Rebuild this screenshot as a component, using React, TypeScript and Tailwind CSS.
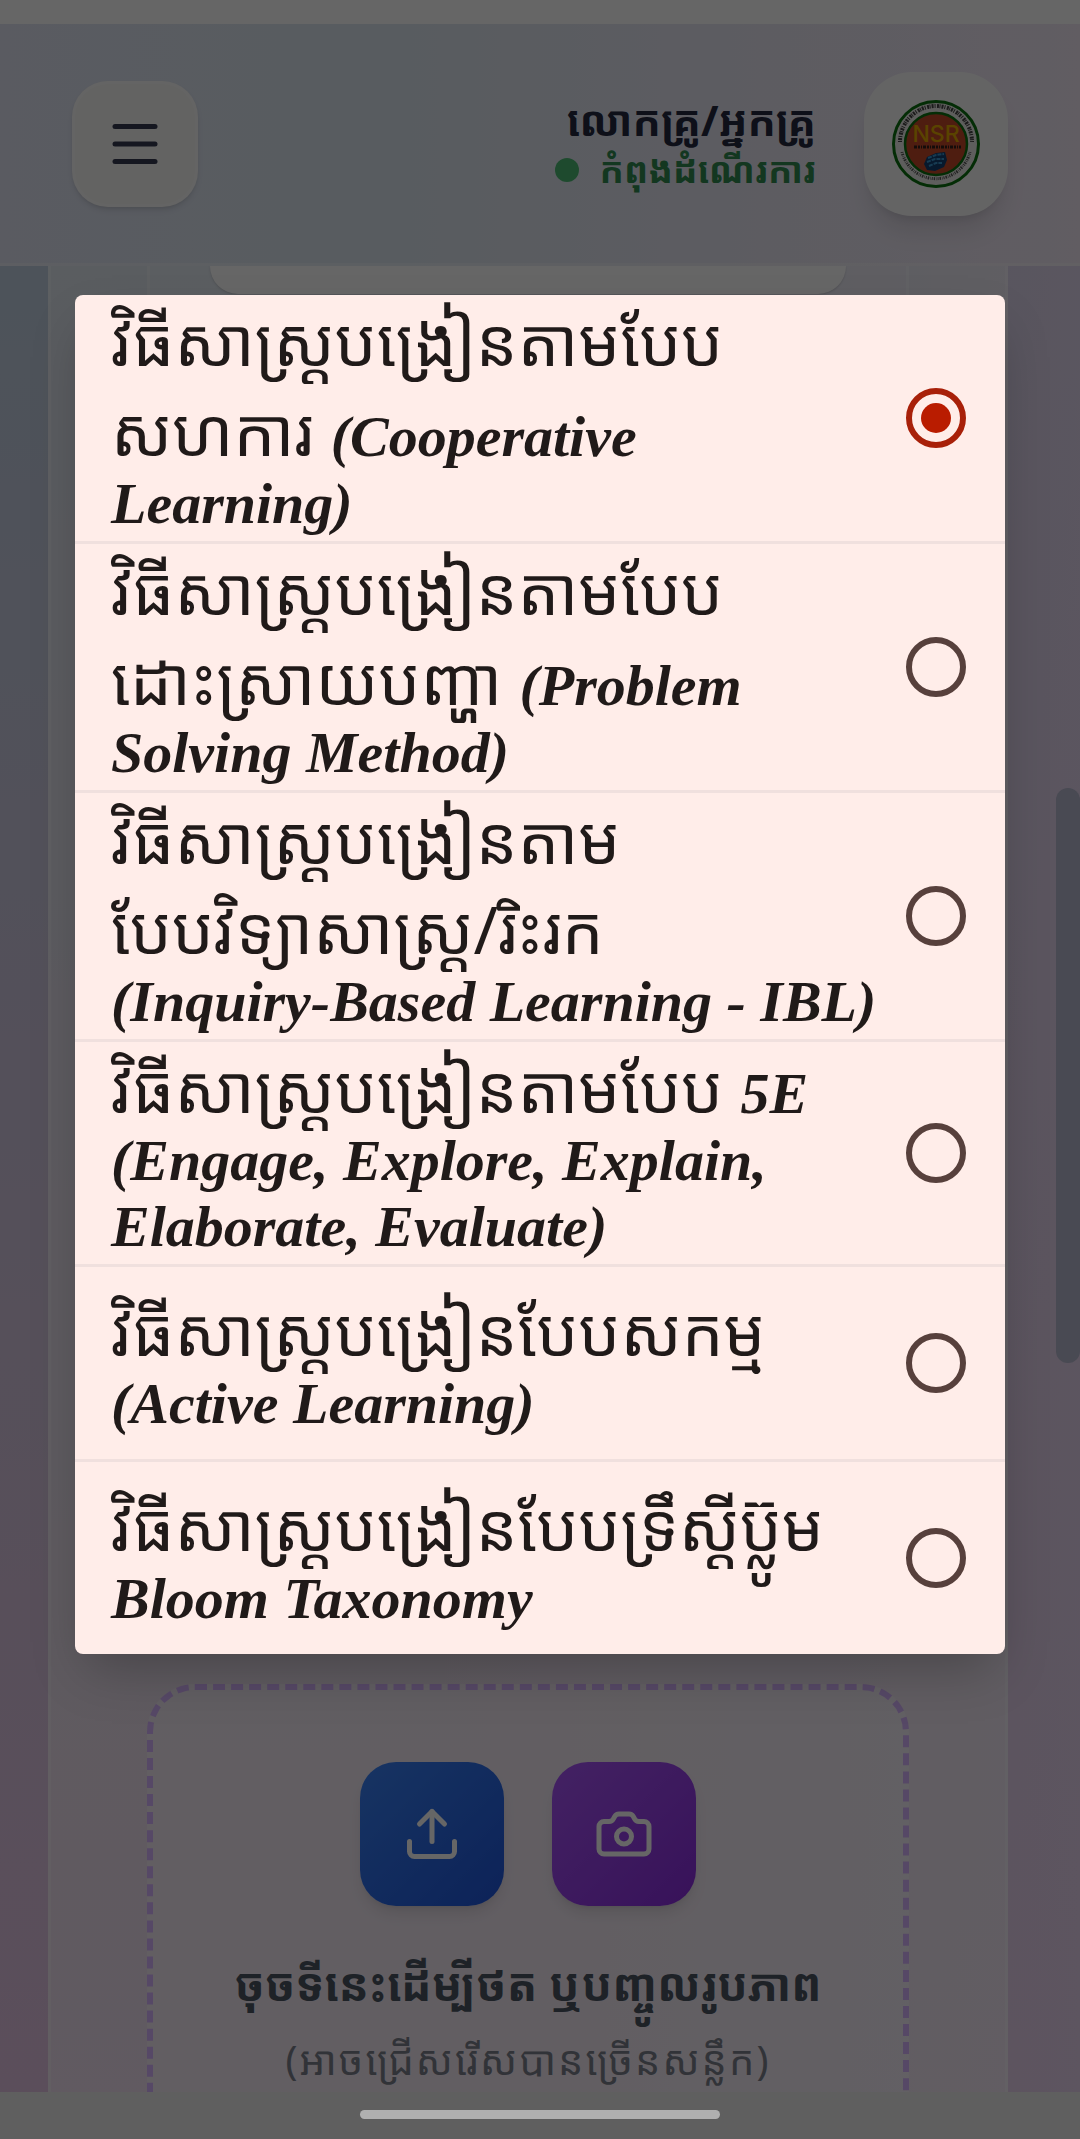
import React from "react";
import clsx from "clsx";
import { Camera, Menu, Upload } from "lucide-react";

type Part = { text: string; khmer?: boolean };
type Method = { id: string; lines: Part[][] };

const base = "វិធីសាស្ត្របង្រៀន";

const methods: Method[] = [
  {
    id: "cooperative",
    lines: [
      [{ text: base + "តាមបែប", khmer: true }],
      [{ text: "សហការ ", khmer: true }, { text: "(Cooperative" }],
      [{ text: "Learning)" }],
    ],
  },
  {
    id: "problem",
    lines: [
      [{ text: base + "តាមបែប", khmer: true }],
      [{ text: "ដោះស្រាយបញ្ហា ", khmer: true }, { text: "(Problem" }],
      [{ text: "Solving Method)" }],
    ],
  },
  {
    id: "inquiry",
    lines: [
      [{ text: base + "តាម", khmer: true }],
      [{ text: "បែបវិទ្យាសាស្ត្រ/រិះរក", khmer: true }],
      [{ text: "(Inquiry-Based Learning - IBL)" }],
    ],
  },
  {
    id: "five-e",
    lines: [
      [{ text: base + "តាមបែប ", khmer: true }, { text: "5E" }],
      [{ text: "(Engage, Explore, Explain," }],
      [{ text: "Elaborate, Evaluate)" }],
    ],
  },
  {
    id: "active",
    lines: [
      [{ text: base + "បែបសកម្ម", khmer: true }],
      [{ text: "(Active Learning)" }],
    ],
  },
  {
    id: "bloom",
    lines: [
      [{ text: base + "បែបទ្រឹស្តីប៊្លូម", khmer: true }],
      [{ text: "Bloom Taxonomy" }],
    ],
  },
];

const Emblem = () => (
  <svg viewBox="0 0 88 88" className="size-[88px]" role="img" aria-label="NSR">
    <circle cx="44" cy="44" r="42.5" fill="#ecece8" stroke="#0b700f" strokeWidth="3" />
    {/* lettering ring */}
    <path
      d="M8 42A36 36 0 0 1 80 42"
      fill="none"
      stroke="#444"
      strokeWidth="4"
      strokeDasharray="1 1 2 1 1 1.5 2 .5"
    />
    <path
      d="M10 52A35 35 0 0 0 78 52"
      fill="none"
      stroke="#555"
      strokeWidth="3"
      strokeDasharray="1 1 1.5 1 .5 1"
    />
    <circle cx="44" cy="44" r="31" fill="#c24a2a" stroke="#0b700f" strokeWidth="2.5" />
    <text
      x="44"
      y="42"
      textAnchor="middle"
      fontSize="23"
      fill="#e0a800"
      className="font-['Inter',sans-serif] font-medium"
    >
      NSR
    </text>
    <path d="M22 47h47" stroke="#33201a" strokeWidth="3" strokeDasharray="3 1 2 1 1 1" />
    <path d="M35 57l9-4 9-1 2 8-3 7-9 4-8-1-3-6z" fill="#123f70" />
    <path
      d="M36 58l8-3 8-1M35 62l8-3 9 0M37 66l7-3 6 0"
      stroke="#3a94cc"
      strokeWidth="2"
      strokeDasharray="4 1"
      fill="none"
    />
  </svg>
);

const Header: React.FC = () => (
  <header className="flex h-[242px] shrink-0 items-center justify-between border-b-[3px] border-white/30 bg-linear-to-r from-[#e0e4f3] via-[#dce6f0] via-35% to-[#f2e8f5] px-[72px]">
    <button
      aria-label="Menu"
      className="flex size-[126px] items-center justify-center rounded-[36px] border-[3px] border-white/40 bg-[#f8f8f6] text-[#363a50] shadow-md"
    >
      <Menu size={60} />
    </button>
    <div className="flex items-center gap-12">
      <div className="flex flex-col items-end font-bold">
        <p className="text-[42px] leading-[52px] text-[#252840]">លោកគ្រូ/អ្នកគ្រូ</p>
        <p className="flex items-center gap-5 text-[36px] leading-[48px] text-[#308a50]">
          <span className="size-6 rounded-full bg-[#4cba74]" />
          កំពុងដំណើរការ
        </p>
      </div>
      <div className="flex size-36 items-center justify-center rounded-[48px] border-[3px] border-white/40 bg-[#f9f9f9] shadow-xl">
        <Emblem />
      </div>
    </div>
  </header>
);

const Uploader: React.FC = () => (
  <section className="flex h-[480px] flex-col items-center rounded-[48px] border-[6px] border-dashed border-[#d8b4fe] bg-white/30 pt-[72px]">
    <div className="flex gap-12">
      <button
        aria-label="Upload"
        className="flex size-36 items-center justify-center rounded-[36px] bg-linear-to-br from-[#3b82f6] to-[#2055dc] text-white shadow-lg"
      >
        <Upload size={60} />
      </button>
      <button
        aria-label="Camera"
        className="flex size-36 items-center justify-center rounded-[36px] bg-linear-to-br from-[#a855f7] to-[#8b2be0] text-white shadow-lg"
      >
        <Camera size={60} />
      </button>
    </div>
    <p className="mt-10 text-[45px] leading-[76px] font-bold text-[#4b5563]">
      ចុចទីនេះដើម្បីថត ឬបញ្ចូលរូបភាព
    </p>
    <p className="text-[40px] leading-[76px] tracking-wider text-[#7c818c]">
      (អាចជ្រើសរើសបានច្រើនសន្លឹក)
    </p>
  </section>
);

const MethodPicker: React.FC = () => (
  <form className="w-full divide-y-[3px] divide-[#f0e0de] overflow-hidden rounded-lg bg-[#ffede9] shadow-2xl">
    {methods.map((method, i) => (
      <label
        key={method.id}
        className={clsx(
          "flex items-center justify-between pr-[39px] pl-9 text-[#201a19]",
          method.lines.length < 3 && "py-[18px]"
        )}
      >
        <span>
          {method.lines.map((line, n) => (
            <span
              key={n}
              className={clsx(
                "block whitespace-nowrap",
                line[0].khmer
                  ? "h-[90px] text-[66px] leading-[90px]"
                  : "h-[66px] text-[58px] leading-[58px] font-['Liberation_Serif',serif]"
              )}
            >
              {line.map((part) =>
                part.khmer ? (
                  part.text
                ) : (
                  <span
                    key={part.text}
                    className="font-['Liberation_Serif',serif] text-[58px] leading-none font-bold italic"
                  >
                    {part.text}
                  </span>
                )
              )}
            </span>
          ))}
        </span>
        <input
          type="radio"
          name="method"
          defaultChecked={i === 0}
          className="size-[60px] shrink-0 appearance-none rounded-full border-[6px] border-[#57403c] bg-clip-content p-[9px] checked:border-[#a82009] checked:bg-[#b91c00]"
        />
      </label>
    ))}
  </form>
);

export default function App() {
  return (
    <div className="relative flex h-screen flex-col overflow-hidden bg-white font-['Noto_Sans_Khmer','Noto_Sans',sans-serif]">
      <div className="h-6 shrink-0" />
      <Header />
      <main className="flex min-h-0 flex-1 flex-col bg-linear-to-b from-[#c0d0e2] via-[#d2c8e0] via-45% to-[#e4c4e4]">
        <div className="flex min-h-0 flex-1 flex-col bg-linear-to-r from-transparent from-40% to-[#ead8f2]/80 pr-[72px] pl-12">
          <div className="min-h-0 flex-1 overflow-hidden border-x-[3px] border-white/30 bg-white/50 px-24">
            <div className="mb-[118px] h-[1300px] border-x-[3px] border-white/30 bg-white/10 px-[60px]">
              <div className="h-7 rounded-b-[48px] bg-white shadow-sm" />
            </div>
            <Uploader />
          </div>
        </div>
      </main>
      <div className="h-[47px] shrink-0 bg-[#eee]" />

      <div className="absolute inset-0 flex flex-col items-center bg-black/60 px-[75px] pt-[295px]">
        <MethodPicker />
      </div>
      <div className="absolute top-[788px] right-0 h-[575px] w-6 rounded-full bg-[#494a53]" />
      <div className="absolute bottom-5 left-1/3 h-[9px] w-1/3 rounded-full bg-[#b0b0b0]" />
    </div>
  );
}
